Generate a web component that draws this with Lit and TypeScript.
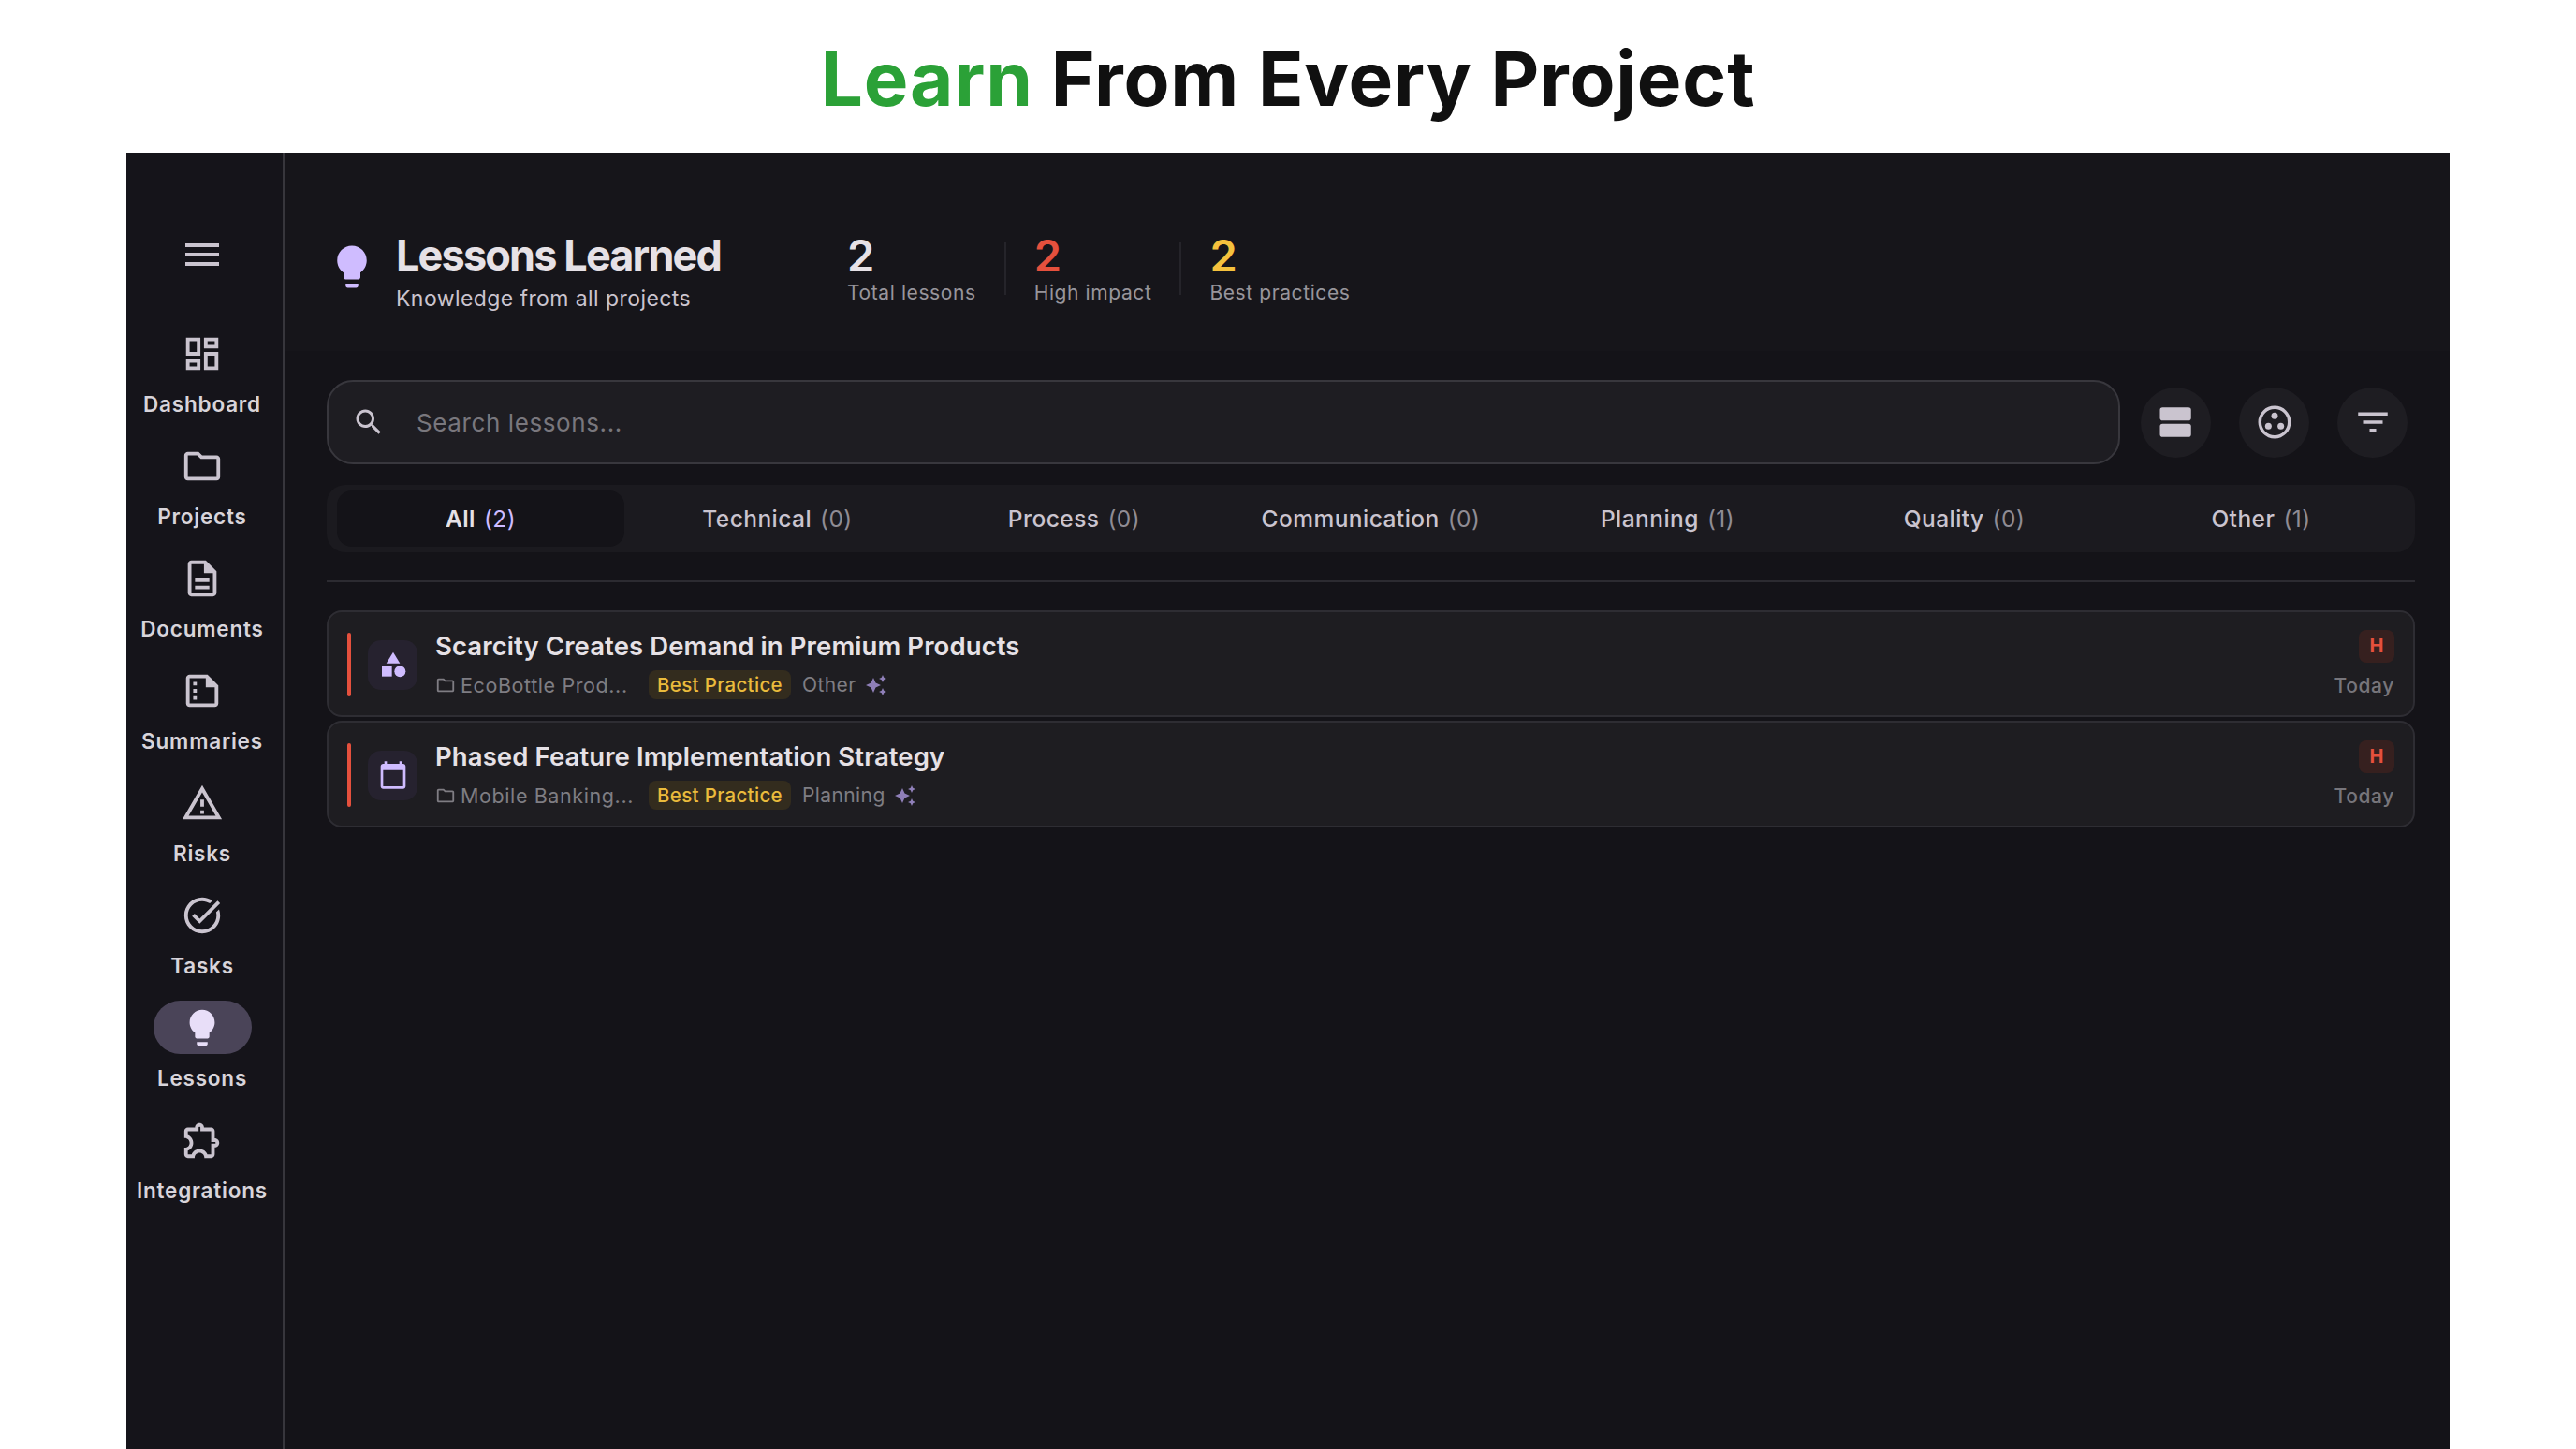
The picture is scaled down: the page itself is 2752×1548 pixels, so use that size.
import { LitElement, html, css, svg } from 'lit';
import { customElement } from 'lit/decorators.js';

const icons: Record<string, unknown> = {
  menu: svg`<path d="M3 18h18v-2H3v2zm0-5h18v-2H3v2zm0-7v2h18V6H3z"/>`,
  dashboard: svg`<path d="M19 5v2h-4V5h4M9 5v6H5V5h4m10 8v6h-4v-6h4M9 17v2H5v-2h4M21 3h-8v6h8V3zM11 3H3v10h8V3zm10 8h-8v10h8V11zm-10 4H3v6h8v-6z"/>`,
  folder: svg`<path d="M9.17 6l2 2H20v10H4V6h5.17M10 4H4c-1.1 0-1.99.9-1.99 2L2 18c0 1.1.9 2 2 2h16c1.1 0 2-.9 2-2V8c0-1.1-.9-2-2-2h-8l-2-2z"/>`,
  doc: svg`<path d="M8 16h8v2H8zm0-4h8v2H8zm6-10H6c-1.1 0-2 .9-2 2v16c0 1.1.89 2 1.99 2H18c1.1 0 2-.9 2-2V8l-6-6zm4 18H6V4h7v5h5v11z"/><path d="M14 3l5 5.5h-5z"/>`,
  summary: svg`<path d="M15 3H5c-1.1 0-2 .9-2 2v14c0 1.1.9 2 2 2h14c1.1 0 2-.9 2-2V9l-6-6zM5 19V5h9v5h5v9H5z"/><path d="M15 4l5 5.5h-5zM7 7h2v2H7zm0 4h2v2H7zm0 4h2v2H7z"/>`,
  warning: svg`<path d="M12 5.99L19.53 19H4.47L12 5.99M12 2L1 21h22L12 2zm1 14h-2v2h2v-2zm0-6h-2v4h2v-4z"/>`,
  task: svg`<path d="M22 5.18L10.59 16.6l-4.24-4.24 1.41-1.41 2.83 2.83 10-10L22 5.18zm-2.21 5.04c.13.57.21 1.17.21 1.78 0 4.42-3.58 8-8 8s-8-3.58-8-8 3.58-8 8-8c1.58 0 3.04.46 4.28 1.25l1.44-1.44C16.1 2.67 14.13 2 12 2 6.48 2 2 6.48 2 12s4.48 10 10 10 10-4.48 10-10c0-1.19-.22-2.33-.6-3.39l-1.61 1.61z"/>`,
  bulb: svg`<path d="M9 21c0 .55.45 1 1 1h4c.55 0 1-.45 1-1v-1H9v1zm3-19C8.14 2 5 5.14 5 9c0 2.38 1.19 4.47 3 5.74V17c0 .55.45 1 1 1h6c.55 0 1-.45 1-1v-2.26c1.81-1.27 3-3.36 3-5.74 0-3.86-3.14-7-7-7z"/>`,
  puzzle: svg`<path d="M10.5 4.5c.28 0 .5.22.5.5v2h6v6h2c.28 0 .5.22.5.5s-.22.5-.5.5h-2v6h-2.12c-.68-1.75-2.39-3-4.38-3s-3.7 1.25-4.38 3H4v-2.12c1.75-.68 3-2.39 3-4.38 0-1.99-1.24-3.7-2.99-4.38L4 7h6V5c0-.28.22-.5.5-.5m0-2C9.12 2.5 8 3.62 8 5H4c-1.1 0-1.99.9-1.99 2v3.8h.29c1.49 0 2.7 1.21 2.7 2.7s-1.21 2.7-2.7 2.7H2V20c0 1.1.9 2 2 2h3.8v-.3c0-1.49 1.21-2.7 2.7-2.7s2.7 1.21 2.7 2.7v.3H17c1.1 0 2-.9 2-2v-4c1.38 0 2.5-1.12 2.5-2.5S20.38 11 19 11V7c0-1.1-.9-2-2-2h-4c0-1.38-1.12-2.5-2.5-2.5z"/>`,
  search: svg`<path d="M15.5 14h-.79l-.28-.27C15.41 12.59 16 11.11 16 9.5 16 5.91 13.09 3 9.5 3S3 5.91 3 9.5 5.91 16 9.5 16c1.61 0 3.09-.59 4.23-1.57l.27.28v.79l5 4.99L20.49 19l-4.99-5zm-6 0C7.01 14 5 11.99 5 9.5S7.01 5 9.5 5 14 7.01 14 9.5 11.99 14 9.5 14z"/>`,
  agenda: svg`<rect x="2" y="3" width="19" height="8" rx="1.6"/><rect x="2" y="13" width="19" height="8" rx="1.6"/>`,
  dots: svg`<path fill-rule="evenodd" d="M12 2a10 10 0 1 0 0 20 10 10 0 0 0 0-20zm0 2a8 8 0 1 1 0 16 8 8 0 0 1 0-16z"/><circle cx="12" cy="8.2" r="2"/><circle cx="8.2" cy="14.4" r="2"/><circle cx="15.8" cy="14.4" r="2"/>`,
  filter: svg`<path d="M10 18h4v-2h-4v2zM3 6v2h18V6H3zm3 7h12v-2H6v2z"/>`,
  category: svg`<path d="M12 2l-5.5 9h11z"/><circle cx="17.5" cy="17.5" r="4.5"/><path d="M3 13.5h8v8H3z"/>`,
  calendar: svg`<path d="M20 3h-1V1h-2v2H7V1H5v2H4c-1.1 0-2 .9-2 2v16c0 1.1.9 2 2 2h16c1.1 0 2-.9 2-2V5c0-1.1-.9-2-2-2zm0 18H4V8h16v13z"/>`,
  spark: svg`<path d="M19 9l1.25-2.75L23 5l-2.75-1.25L19 1l-1.25 2.75L15 5l2.75 1.25L19 9zm-7.5.5L9 4 6.5 9.5 1 12l5.5 2.5L9 20l2.5-5.5L17 12l-5.5-2.5zM19 15l-1.25 2.75L15 19l2.75 1.25L19 23l1.25-2.75L23 19l-2.75-1.25L19 15z"/>`,
};

const icon = (name: string, cls = '') =>
  html`<svg class=${cls} viewBox="0 0 24 24" fill="currentColor">${icons[name]}</svg>`;

const navItems = [
  { label: 'Dashboard', icon: 'dashboard' },
  { label: 'Projects', icon: 'folder' },
  { label: 'Documents', icon: 'doc' },
  { label: 'Summaries', icon: 'summary' },
  { label: 'Risks', icon: 'warning' },
  { label: 'Tasks', icon: 'task' },
  { label: 'Lessons', icon: 'bulb', active: true },
  { label: 'Integrations', icon: 'puzzle' },
];

const tabs = [
  { label: 'All', count: 2, active: true },
  { label: 'Technical', count: 0 },
  { label: 'Process', count: 0 },
  { label: 'Communication', count: 0 },
  { label: 'Planning', count: 1 },
  { label: 'Quality', count: 0 },
  { label: 'Other', count: 1 },
];

const lessons = [
  { title: 'Scarcity Creates Demand in Premium Products', project: 'EcoBottle Prod...', category: 'Other', icon: 'category' },
  { title: 'Phased Feature Implementation Strategy', project: 'Mobile Banking...', category: 'Planning', icon: 'calendar' },
];

@customElement('app-root')
export class AppRoot extends LitElement {
  static styles = css`
    :host {
      display: block;
      height: 1548px;
      overflow: hidden;
      background: #fff;
      font-family: Inter, 'Liberation Sans', sans-serif;
    }
    .headline {
      height: 163px;
      margin: 0;
      display: flex;
      align-items: center;
      justify-content: center;
      padding-top: 3px;
      box-sizing: border-box;
      font-size: 80px;
      font-weight: 650;
      letter-spacing: 0.8px;
      color: #101010;
    }
    .headline em {
      font-style: normal;
      color: #2ba137;
      margin-right: 19px;
    }
    .window {
      margin: 0 135px;
      height: 1385px;
      display: flex;
      background: #141318;
      color: #e6e1e6;
    }
    svg {
      display: block;
      flex: none;
    }
    .sidebar {
      width: 169px;
      flex: none;
      box-sizing: border-box;
      border-right: 2px solid #37363c;
      background: #15141a;
      display: flex;
      flex-direction: column;
      align-items: center;
      padding: 81px 5px 0 0;
      color: #cac4cf;
    }
    .burger {
      height: 56px;
      display: flex;
      align-items: center;
      margin-bottom: 49px;
    }
    .burger svg {
      width: 48px;
      height: 48px;
    }
    .nav-item {
      height: 120px;
      display: flex;
      flex-direction: column;
      align-items: center;
      gap: 11px;
    }
    .pill {
      width: 105px;
      height: 57px;
      border-radius: 29px;
      display: flex;
      align-items: center;
      justify-content: center;
    }
    .pill svg {
      width: 46px;
      height: 46px;
    }
    .nav-item.active .pill {
      background: #4a4458;
      color: #e8def8;
    }
    .nav-label {
      font-size: 22.5px;
      line-height: 30px;
      font-weight: 560;
      letter-spacing: 0.8px;
      color: #d8d4da;
      white-space: nowrap;
    }
    .main {
      flex: 1;
      min-width: 0;
    }
    .head {
      height: 212px;
      box-sizing: border-box;
      background: #16151a;
      padding: 84px 0 0 45px;
      display: flex;
      align-items: flex-start;
    }
    .head-bulb {
      width: 54px;
      height: 54px;
      margin: 11px 20px 0 0;
      color: #cfbcff;
    }
    .head-title {
      margin: 0;
      font-size: 45px;
      line-height: 52px;
      font-weight: 700;
      letter-spacing: -1.85px;
      color: #e6e1e6;
    }
    .head-sub {
      margin-top: 5px;
      font-size: 23px;
      line-height: 30px;
      letter-spacing: 0.42px;
      color: #cac4cf;
    }
    .stats {
      display: flex;
      align-items: center;
      gap: 30px;
      margin-left: 135px;
    }
    .stat-value {
      font-size: 47px;
      line-height: 52px;
      font-weight: 600;
    }
    .stat-value.red {
      color: #e5503d;
    }
    .stat-value.yellow {
      color: #f5c13d;
    }
    .stat-label {
      font-size: 21px;
      line-height: 28px;
      letter-spacing: 0.6px;
      color: #98959c;
    }
    .stat-sep {
      width: 2px;
      height: 56px;
      background: #25242a;
    }
    .content {
      padding: 31px 37px 0 45px;
    }
    .toolbar {
      display: flex;
      align-items: center;
      padding-right: 8px;
    }
    .search {
      flex: 1;
      height: 90px;
      box-sizing: border-box;
      display: flex;
      align-items: center;
      gap: 33px;
      padding-left: 25px;
      margin-right: 22px;
      background: #1e1d22;
      border: 2px solid #38373d;
      border-radius: 28px;
      font-size: 26px;
      letter-spacing: 0.6px;
      color: #79777d;
    }
    .search svg {
      width: 36px;
      height: 36px;
      color: #cac4cf;
    }
    .tool-buttons {
      display: flex;
      gap: 30px;
    }
    .tool {
      width: 75px;
      height: 75px;
      border-radius: 50%;
      background: #1e1d22;
      color: #cac4cf;
      display: flex;
      align-items: center;
      justify-content: center;
    }
    .tool svg {
      width: 42px;
      height: 42px;
    }
    .tabs {
      margin-top: 22px;
      padding: 6px;
      display: grid;
      grid-template-columns: repeat(7, 1fr);
      background: #1b1a1f;
      border-radius: 20px;
    }
    .tab {
      height: 60px;
      margin: 0 5px;
      border-radius: 16px;
      display: flex;
      align-items: center;
      justify-content: center;
      gap: 9px;
      font-size: 24.5px;
      font-weight: 500;
      letter-spacing: 0.45px;
      color: #cac4cf;
    }
    .tab span {
      font-weight: 400;
      color: #8f8c94;
    }
    .tab.active {
      background: #141318;
      color: #e6e1e6;
      font-weight: 600;
    }
    .tab.active span {
      color: #cfbcff;
    }
    .rule {
      height: 2px;
      margin: 30px 0;
      background: #2c2b31;
    }
    .cards {
      display: flex;
      flex-direction: column;
      gap: 4px;
    }
    .card {
      height: 114px;
      box-sizing: border-box;
      display: flex;
      align-items: center;
      padding: 2px 20px 0;
      background: #1e1d21;
      border: 2px solid #2e2d33;
      border-radius: 16px;
    }
    .accent {
      width: 4px;
      height: 68px;
      border-radius: 2px;
      background: #e5503d;
      margin-right: 18px;
    }
    .card-icon {
      width: 53px;
      height: 53px;
      flex: none;
      border-radius: 14px;
      background: #26222f;
      color: #cfbcff;
      display: flex;
      align-items: center;
      justify-content: center;
      margin-right: 19px;
    }
    .card-icon svg {
      width: 32px;
      height: 32px;
    }
    .card-body {
      flex: 1;
      min-width: 0;
    }
    .card-title {
      font-size: 27.5px;
      line-height: 34px;
      font-weight: 560;
      letter-spacing: 0.1px;
      color: #e6e1e6;
    }
    .meta {
      margin-top: 9px;
      height: 31px;
      display: flex;
      align-items: center;
      font-size: 21px;
      letter-spacing: 0.4px;
      color: #7f7d83;
    }
    .project {
      width: 228px;
      display: flex;
      align-items: center;
      gap: 5px;
      font-size: 21.5px;
      letter-spacing: 0.6px;
    }
    .project svg {
      width: 22px;
      height: 22px;
    }
    .practice {
      height: 31px;
      width: 152px;
      border-radius: 8px;
      background: #332c1e;
      color: #eabb3c;
      font-size: 20.5px;
      letter-spacing: 0.35px;
      font-weight: 500;
      display: flex;
      align-items: center;
      justify-content: center;
      margin-right: 12px;
    }
    .spark {
      width: 24px;
      height: 24px;
      margin-left: 9px;
      color: #8f7fb8;
    }
    .card-side {
      display: flex;
      flex-direction: column;
      align-items: flex-end;
      gap: 9px;
    }
    .impact {
      width: 38px;
      height: 35px;
      border-radius: 8px;
      background: #36201f;
      color: #e5503d;
      font-size: 20px;
      font-weight: 700;
      display: flex;
      align-items: center;
      justify-content: center;
    }
    .date {
      font-size: 21px;
      line-height: 31px;
      font-weight: 500;
      letter-spacing: 0.6px;
      color: #77757b;
    }
  `;

  render() {
    return html`
      <h1 class="headline"><em>Learn</em> From Every Project</h1>
      <div class="window">
        <nav class="sidebar">
          <div class="burger">${icon('menu')}</div>
          ${navItems.map(
            (item) => html`<div class="nav-item ${item.active ? 'active' : ''}">
              <div class="pill">${icon(item.icon)}</div>
              <div class="nav-label">${item.label}</div>
            </div>`
          )}
        </nav>
        <div class="main">
          <header class="head">
            ${icon('bulb', 'head-bulb')}
            <div>
              <h2 class="head-title">Lessons Learned</h2>
              <div class="head-sub">Knowledge from all projects</div>
            </div>
            <div class="stats">
              <div><div class="stat-value">2</div><div class="stat-label">Total lessons</div></div>
              <div class="stat-sep"></div>
              <div><div class="stat-value red">2</div><div class="stat-label">High impact</div></div>
              <div class="stat-sep"></div>
              <div><div class="stat-value yellow">2</div><div class="stat-label">Best practices</div></div>
            </div>
          </header>
          <div class="content">
            <div class="toolbar">
              <div class="search">${icon('search')}<div>Search lessons...</div></div>
              <div class="tool-buttons">
                <div class="tool">${icon('agenda')}</div>
                <div class="tool">${icon('dots')}</div>
                <div class="tool">${icon('filter')}</div>
              </div>
            </div>
            <div class="tabs">
              ${tabs.map(
                (t) => html`<div class="tab ${t.active ? 'active' : ''}">${t.label} <span>(${t.count})</span></div>`
              )}
            </div>
            <div class="rule"></div>
            <div class="cards">
              ${lessons.map(
                (l) => html`<div class="card">
                  <div class="accent"></div>
                  <div class="card-icon">${icon(l.icon)}</div>
                  <div class="card-body">
                    <div class="card-title">${l.title}</div>
                    <div class="meta">
                      <div class="project">${icon('folder')}<span>${l.project}</span></div>
                      <div class="practice">Best Practice</div>
                      <span>${l.category}</span>
                      ${icon('spark', 'spark')}
                    </div>
                  </div>
                  <div class="card-side">
                    <div class="impact">H</div>
                    <div class="date">Today</div>
                  </div>
                </div>`
              )}
            </div>
          </div>
        </div>
      </div>
    `;
  }
}
